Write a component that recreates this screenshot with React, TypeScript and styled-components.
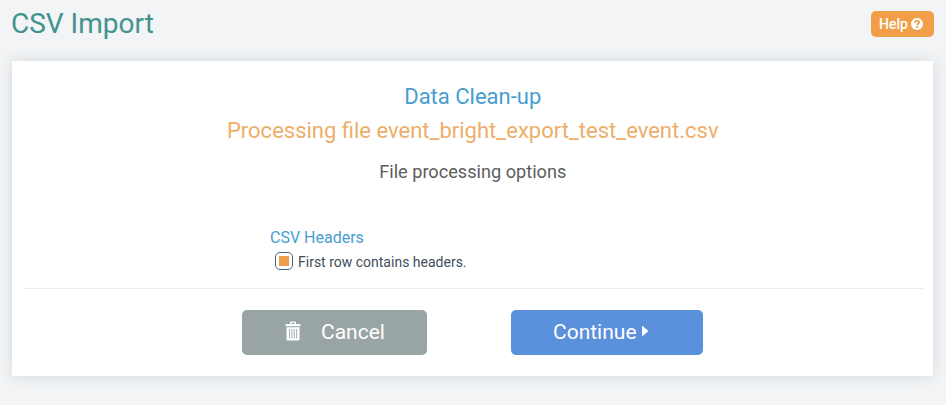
import React from "react";
import styled, { createGlobalStyle } from "styled-components";

const GlobalStyle = createGlobalStyle`
  * { box-sizing: border-box; }
  body {
    margin: 0;
    background: #f2f4f6;
    font-family: Roboto, "Liberation Sans", sans-serif;
  }
  h1, h2, h3, h4, h5 { margin: 0; font-weight: 400; }
  button { font-family: inherit; border: 0; padding: 0; cursor: pointer; color: #fff; }
`;

const Page = styled.main`
  height: 405px;
  padding: 0 13px 0 11px;
  overflow: hidden;
`;

const Header = styled.header`
  display: flex;
  justify-content: space-between;
  align-items: flex-start;
  height: 61px;
`;

const Title = styled.h1`
  margin-top: 7px;
  font-size: 28px;
  line-height: 34px;
  color: #42928e;
`;

const HelpButton = styled.button`
  display: flex;
  align-items: center;
  gap: 3px;
  width: 63px;
  height: 26px;
  margin: 11px -1px 0 0;
  padding: 0 0 1px 8px;
  border-radius: 5px;
  background: #f09f48;
  font-size: 14px;
  line-height: 18px;
  font-weight: 500;
`;

const HelpText = styled.span`
  padding-top: 1px;
`;

const Card = styled.section`
  height: 315px;
  padding: 19px 10px 0 11px;
  margin-left: 0.5px;
  background: #fff;
  box-shadow: 0 0 14px rgba(60, 75, 75, 0.15);
`;

const StepTitle = styled.h2`
  font-size: 22px;
  line-height: 34px;
  text-align: center;
  color: #479dcf;
`;

const FileTitle = styled.h3`
  font-size: 22px;
  line-height: 34px;
  text-align: center;
  color: #edae69;
`;

const OptionsTitle = styled.h4`
  margin-top: 12px;
  font-size: 18.15px;
  line-height: 24px;
  text-align: center;
  color: #5d5d5d;
`;

const Options = styled.div`
  height: 104px;
  margin: 0 0 0 247.5px;
  padding-top: 44px;
`;

const OptionHeading = styled.h5`
  font-size: 16px;
  line-height: 20px;
  color: #479dcf;
`;

const OptionLabel = styled.label`
  display: flex;
  align-items: center;
  gap: 5px;
  margin: 4px 0 0 5px;
  height: 18px;
  font-size: 14px;
  line-height: 18px;
  color: #414f5c;
`;

const LabelText = styled.span`
  padding-top: 2px;
`;

const CheckBox = styled.span`
  display: grid;
  place-items: center;
  width: 18px;
  height: 18px;
  border: 1px solid #426785;
  border-radius: 5px;
  &::before {
    content: "";
    width: 10px;
    height: 10px;
    background: #ef9c4b;
  }
`;

const Actions = styled.footer`
  display: flex;
  gap: 84px;
  padding: 21px 0 0 219.5px;
  border-top: 1px solid #ececec;
`;

const ActionButton = styled.button<{ $tone: "muted" | "primary" }>`
  display: flex;
  align-items: center;
  width: ${(p) => (p.$tone === "muted" ? 185 : 192)}px;
  height: 45px;
  padding: 0 0 1px ${(p) => (p.$tone === "muted" ? 43 : 42)}px;
  gap: ${(p) => (p.$tone === "muted" ? 20 : 5)}px;
  border-radius: 5px;
  background: ${(p) => (p.$tone === "muted" ? "#99a5a5" : "#5b90dc")};
  font-size: 21px;
`;

const Icon = styled.svg`
  display: block;
  flex: none;
`;

const ButtonIcon = styled(Icon)`
  margin-bottom: 2px;
`;

const QuestionIcon = () => (
  <Icon width="12" height="12" viewBox="0 0 12 12">
    <circle cx="6" cy="6" r="6" fill="#fff" />
    <path d="M3.9 4.7C3.9 3.2 4.7 2.6 6 2.6S8.1 3.3 8.1 4.4C8.1 5.8 6.2 5.6 6.2 7.3" fill="none" stroke="#f09f48" strokeWidth="1.8" />
    <path d="M5.2 8.1h1.9v1.8H5.2z" fill="#f09f48" />
  </Icon>
);

const TrashIcon = () => (
  <ButtonIcon width="16" height="20" viewBox="0 0 16 20">
    <path d="M5 3V1.2Q5 .5 5.8.5h4.4q.8 0 .8.7V3h4.5v2.2H.5V3zM6.4 1.8V3h3.2V1.8z" fill="#fff" fillRule="evenodd" />
    <path d="M1.5 6.2h13v12q0 1.3-1.3 1.3H2.8q-1.3 0-1.3-1.3z" fill="#fff" />
    <path d="M4.5 8v9.5M6.9 8v9.5M9.2 8v9.5M11.6 8v9.5" stroke="#99a5a5" strokeWidth=".9" />
  </ButtonIcon>
);

const CaretIcon = () => (
  <ButtonIcon width="7" height="12" viewBox="0 0 7 12">
    <path d="M0 .5L6.5 6L0 11.5z" fill="#fff" />
  </ButtonIcon>
);

export default function App() {
  return (
    <Page>
      <GlobalStyle />
      <Header>
        <Title>CSV Import</Title>
        <HelpButton>
          <HelpText>Help</HelpText>
          <QuestionIcon />
        </HelpButton>
      </Header>
      <Card>
        <StepTitle>Data Clean-up</StepTitle>
        <FileTitle>Processing file event_bright_export_test_event.csv</FileTitle>
        <OptionsTitle>File processing options</OptionsTitle>
        <Options>
          <OptionHeading>CSV Headers</OptionHeading>
          <OptionLabel>
            <CheckBox role="checkbox" aria-checked="true" />
            <LabelText>First row contains headers.</LabelText>
          </OptionLabel>
        </Options>
        <Actions>
          <ActionButton $tone="muted">
            <TrashIcon />
            <span>Cancel</span>
          </ActionButton>
          <ActionButton $tone="primary">
            <span>Continue</span>
            <CaretIcon />
          </ActionButton>
        </Actions>
      </Card>
    </Page>
  );
}
